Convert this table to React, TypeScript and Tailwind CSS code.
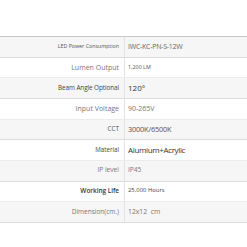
import React from "react";

type Row = { label: string; value: string; lc: string; vc: string; alt: boolean };

const rows: Row[] = [
  { label: "LED Power Consumption", value: "IWC-KC-PN-S-12W", lc: "text-[5.3px] text-[#555]", vc: "text-[7px] text-[#666] tracking-[-0.25px]", alt: true },
  { label: "Lumen Output", value: "1,200 LM", lc: "text-[7px] text-[#777]", vc: "text-[5.4px] text-[#555]", alt: false },
  { label: "Beam Angle Optional", value: "120°", lc: "text-[6.4px] text-[#444] tracking-[-0.1px]", vc: "text-[8px] text-[#333] pl-[2px]", alt: true },
  { label: "Input Voltage", value: "90-265V", lc: "text-[7px] text-[#777]", vc: "text-[7px] text-[#777]", alt: false },
  { label: "CCT", value: "3000K/6500K", lc: "text-[6.4px] text-[#555]", vc: "text-[7.4px] text-[#555] tracking-[-0.2px]", alt: true },
  { label: "Material", value: "Alumium+Acrylic", lc: "text-[6.2px] text-[#444] font-medium", vc: "text-[8px] text-[#333] pl-[2px] tracking-[-0.35px]", alt: false },
  { label: "IP level", value: "IP45", lc: "text-[6.6px] text-[#777]", vc: "text-[6.6px] text-[#777]", alt: true },
  { label: "Working Life", value: "25,000 Hours", lc: "text-[6.4px] text-[#333] font-semibold", vc: "text-[5.9px] text-[#444]", alt: false },
  { label: "Dimension(cm.)", value: "12x12  cm", lc: "text-[6.5px] text-[#777]", vc: "text-[6.8px] text-[#777] whitespace-pre", alt: true },
];

export default function App() {
  return (
    <div className="w-[247px] h-[247px] bg-white" style={{ fontFamily: '"Open Sans", "Noto Sans", sans-serif' }}>
      <div className="pt-[36px]">
        <div className="border-t border-[#c8c8c8]">
          {rows.map((r, i) => (
            <div
              key={i}
              className={`grid grid-cols-[125px_122px] h-[20.67px] border-b ${
                r.alt ? "bg-[#f6f6f6] border-[#dcdcdc]" : "bg-white border-[#ececec]"
              }`}
            >
              <div className={`flex items-center justify-end pr-[5px] border-r border-[#e2e2e2] leading-none ${r.lc}`}>
                {r.label}
              </div>
              <div className={`flex items-center pl-[3px] leading-none ${r.vc}`}>{r.value}</div>
            </div>
          ))}
        </div>
      </div>
    </div>
  );
}
